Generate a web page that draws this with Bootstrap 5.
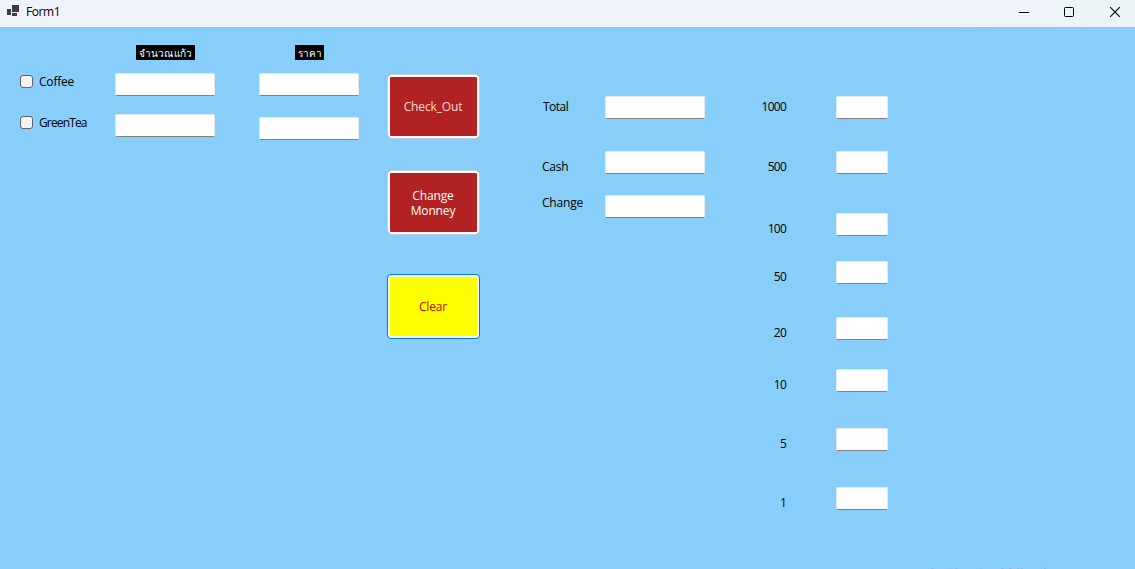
<!DOCTYPE html>
<html lang="th">
<head>
<meta charset="utf-8">
<title>Form1</title>
<meta name="viewport" content="width=device-width, initial-scale=1">
<link href="https://cdn.jsdelivr.net/npm/bootstrap@5.3.0/dist/css/bootstrap.min.css" rel="stylesheet">
<style>
  body { background: #87cefa; font: 12px/15px "Open Sans", "Noto Sans", sans-serif; color: #000; letter-spacing: -.2px; height: 569px; overflow: hidden; }
  .titlebar { height: 27px; background: linear-gradient(90deg, #f0f3fb 0%, #f0f3fb 80%, #ebf3f6 100%); padding-left: 7px; }
  .titlebar .caption { margin: -5px 0 0 7px; letter-spacing: -.4px; }
  .window-buttons { margin-right: 14px; gap: 34px; margin-top: -4px; }
  .surface { height: 542px; }
  .stack > * { flex: none; }
  .form-control { height: 23px; min-height: 0; padding: 2px 4px; font-size: 12px; background: #fff; border: 1px solid #e4e9ee; border-bottom-color: #808080; border-radius: 2px; }
  .form-check-input.tick { width: 13px; height: 13px; margin: 0; border: 1px solid #626262; border-radius: 3px; background-color: #f3f3f3; }
  .tick-row { height: 15px; gap: 6px; }
  .tight { letter-spacing: -.85px; }
  .thai { height: 15px; background: #000; color: #fff; font-size: 10px; line-height: 17px; text-align: center; letter-spacing: 0; white-space: nowrap; overflow: hidden; }
  .thai.wide { letter-spacing: .15px; }
  .action { width: 93px; height: 65px; padding: 0 1px 0 0; font-size: 12px; line-height: 15px; letter-spacing: -.15px; border: 1px solid #c8cdd2; border-radius: 4px; box-shadow: inset 0 0 0 2px #fff; background-color: #b22222 !important; color: #fff !important; }
  .action.soft { color: #f3dcd8 !important; }
  .action.clear { background-color: #ff0 !important; color: #c00000 !important; border-color: #0078d4; }
  .col-ticks { width: 95px; margin-left: 20px; }
  .col-field { width: 100px; }
  .col-label { width: 63px; margin-left: 62px; }
  .col-coin { width: 52px; margin-left: 50px; }
  .col-value { width: 81px; text-align: right; letter-spacing: -.75px; }
  .watermark { left: 926px; bottom: -22px; font-size: 20px; line-height: 32px; color: #a7b0b8; letter-spacing: -.55px; word-spacing: 1px; white-space: nowrap; }
</style>
</head>
<body>
<header class="titlebar d-flex align-items-center">
  <svg width="12" height="12" viewBox="0 0 12 12" fill="#3d3d3d" style="margin-top:-6px" shape-rendering="crispEdges"><path d="M0 4h4v6H0zM5 0h7v7H5zM5 8h5v3H5z"/></svg>
  <span class="caption">Form1</span>
  <div class="window-buttons d-flex align-items-center ms-auto">
    <svg width="12" height="12" viewBox="0 0 12 12"><path d="M2 6.500h10" stroke="#000"/></svg>
    <svg width="12" height="12" viewBox="0 0 12 12"><rect x="1.5" y="1.5" width="9" height="9" rx="1" fill="none" stroke="#000"/></svg>
    <svg width="12" height="12" viewBox="0 0 12 12"><path d="M1.200 1.200l9.600 9.600M10.800 1.200l-9.600 9.600" stroke="#000" stroke-width="1.1"/></svg>
  </div>
</header>

<main class="surface d-flex align-items-start">
  <div class="col-ticks stack d-flex flex-column" style="padding-top:47px;gap:26px">
    <label class="tick-row d-flex align-items-center"><input class="form-check-input tick" type="checkbox"><span>Coffee</span></label>
    <label class="tick-row d-flex align-items-center"><input class="form-check-input tick" type="checkbox"><span class="tight">GreenTea</span></label>
  </div>

  <div class="col-field stack d-flex flex-column" style="padding-top:18px">
    <div class="thai wide" style="width:59px;margin-left:21px">จำนวณแก้ว</div>
    <input class="form-control" type="text" style="margin-top:13px">
    <input class="form-control" type="text" style="margin-top:18px">
  </div>

  <div class="col-field stack d-flex flex-column" style="padding-top:18px;margin-left:44px">
    <div class="thai" style="width:29px;margin-left:36px">ราคา</div>
    <input class="form-control" type="text" style="margin-top:13px">
    <input class="form-control" type="text" style="margin-top:21px">
  </div>

  <div class="stack d-flex flex-column" style="padding-top:47px;margin-left:28px">
    <button class="btn action soft" type="button">Check_Out</button>
    <button class="btn action" type="button" style="margin-top:31px">Change<br>Monney</button>
    <button class="btn action clear" type="button" style="margin-top:39px">Clear</button>
  </div>

  <div class="col-label stack d-flex flex-column" style="padding-top:72px">
    <span style="margin-left:1px;letter-spacing:-.5px">Total</span>
    <span style="margin-top:45px">Cash</span>
    <span style="margin-top:21px">Change</span>
  </div>

  <div class="col-field stack d-flex flex-column" style="padding-top:69px">
    <input class="form-control" type="text">
    <input class="form-control" type="text" style="margin-top:32px">
    <input class="form-control" type="text" style="margin-top:21px">
  </div>

  <div class="col-value stack d-flex flex-column" style="padding-top:72px">
    <span>1000</span>
    <span style="margin-top:45px">500</span>
    <span style="margin-top:47px">100</span>
    <span style="margin-top:33px">50</span>
    <span style="margin-top:41px">20</span>
    <span style="margin-top:37px">10</span>
    <span style="margin-top:44px">5</span>
    <span style="margin-top:44px">1</span>
  </div>

  <div class="col-coin stack d-flex flex-column" style="padding-top:69px">
    <input class="form-control" type="text">
    <input class="form-control" type="text" style="margin-top:32px">
    <input class="form-control" type="text" style="margin-top:39px">
    <input class="form-control" type="text" style="margin-top:25px">
    <input class="form-control" type="text" style="margin-top:33px">
    <input class="form-control" type="text" style="margin-top:29px">
    <input class="form-control" type="text" style="margin-top:36px">
    <input class="form-control" type="text" style="margin-top:36px">
  </div>
</main>
<div class="watermark position-fixed">Activate Windows</div>
<script src="https://cdn.jsdelivr.net/npm/bootstrap@5.3.0/dist/js/bootstrap.bundle.min.js"></script>
</body>
</html>
